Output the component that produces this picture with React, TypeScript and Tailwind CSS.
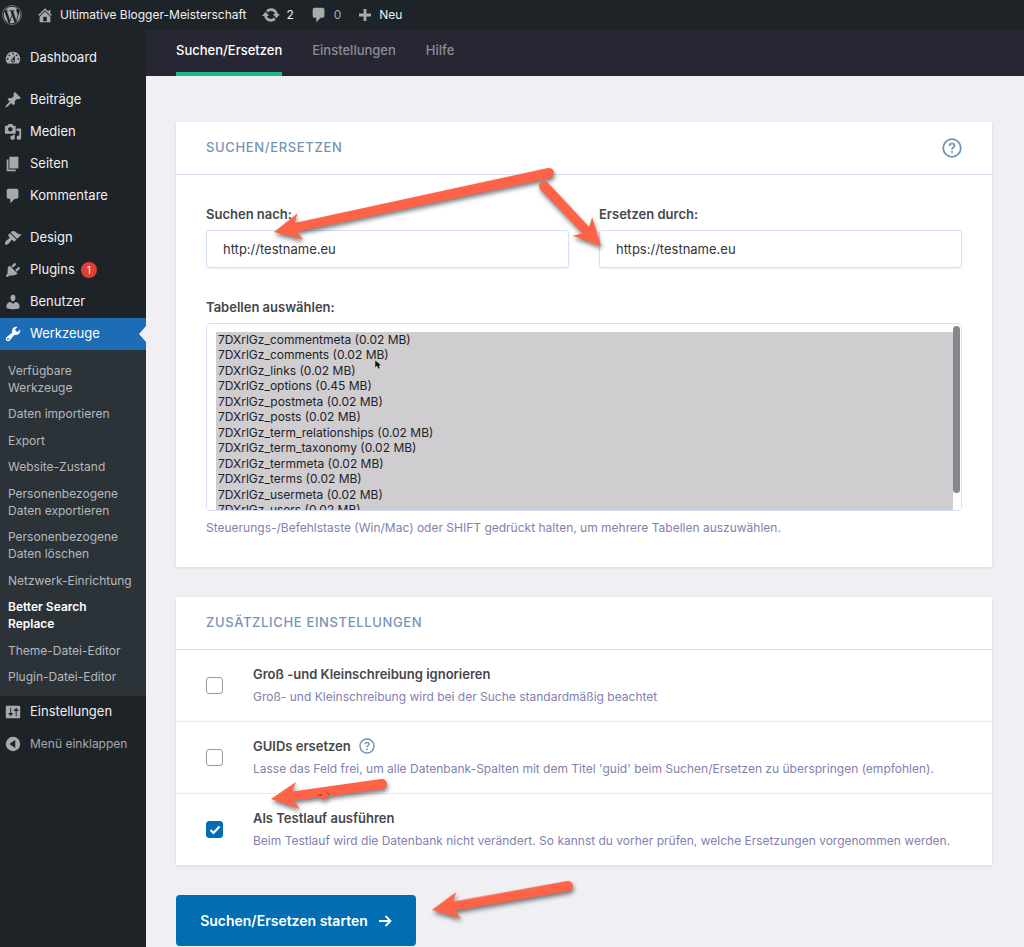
import { useState } from "react";
import type { ReactNode } from "react";
import { FaWordpress } from "react-icons/fa";

const icons = {
  dashboard:
    "M3.76 16h12.48A7.998 7.998 0 0010 3a7.998 7.998 0 00-6.24 13zM10 4c.55 0 1 .45 1 1s-.45 1-1 1-1-.45-1-1 .45-1 1-1zM6 6c.55 0 1 .45 1 1s-.45 1-1 1-1-.45-1-1 .45-1 1-1zm8 0c.55 0 1 .45 1 1s-.45 1-1 1-1-.45-1-1 .45-1 1-1zm-5.37 5.55L12 7v6c0 1.1-.9 2-2 2s-2-.9-2-2c0-.57.24-1.08.63-1.45zM4 10c.55 0 1 .45 1 1s-.45 1-1 1-1-.45-1-1 .45-1 1-1zm12 0c.55 0 1 .45 1 1s-.45 1-1 1-1-.45-1-1 .45-1 1-1zm-5 3c0-.55-.45-1-1-1s-1 .45-1 1 .45 1 1 1 1-.45 1-1z",
  post: "M10.44 3.02l1.82-1.82 6.36 6.35-1.83 1.82c-1.05-.68-2.48-.57-3.41.36l-.75.75c-.92.93-1.04 2.35-.35 3.41l-1.83 1.82-2.41-2.41-2.8 2.79c-.42.42-3.38 2.71-3.8 2.29s1.86-3.39 2.28-3.81l2.79-2.79L4.1 9.36l1.83-1.82c1.05.69 2.48.57 3.4-.36l.75-.75c.93-.92 1.05-2.35.36-3.41z",
  media:
    "M13 11V4c0-.55-.45-1-1-1h-1.67L9 1H5L3.67 3H2c-.55 0-1 .45-1 1v7c0 .55.45 1 1 1h10c.55 0 1-.45 1-1zM7 4.5c1.38 0 2.5 1.12 2.5 2.5S8.38 9.5 7 9.5 4.5 8.38 4.5 7 5.62 4.5 7 4.5zM14 6h5v10.5c0 1.38-1.12 2.5-2.5 2.5S14 17.88 14 16.5s1.12-2.5 2.5-2.5c.17 0 .34.02.5.05V9h-3V6zm-4 8.05V13h2v3.5c0 1.38-1.12 2.5-2.5 2.5S7 17.88 7 16.5 8.12 14 9.5 14c.17 0 .34.02.5.05z",
  page: "M6 15V2h10v13H6zm-1 1h8v2H3V5h2v11z",
  comments: "M5 2h9c1.1 0 2 .9 2 2v7c0 1.1-.9 2-2 2h-2l-5 5v-5H5c-1.1 0-2-.9-2-2V4c0-1.1.9-2 2-2z",
  appearance:
    "M14.48 11.06L7.41 3.99l1.5-1.5c.5-.56 2.3-.47 3.51.32 1.21.8 1.43 1.28 2.91 2.1 1.18.64 2.45 1.26 4.45.85zm-.71.71L6.7 4.7 4.93 6.47c-.39.39-.39 1.02 0 1.41l1.06 1.06c.39.39.39 1.03 0 1.42-.6.6-1.43 1.11-2.21 1.69-.35.26-.7.53-1.01.84C1.43 14.23.4 16.08 1.4 17.07c.99 1 2.84-.03 4.18-1.36.31-.31.58-.66.85-1.02.57-.78 1.08-1.61 1.69-2.21.39-.39 1.02-.39 1.41 0l1.06 1.06c.39.39 1.02.39 1.41 0z",
  plugins:
    "M13.11 4.36L9.87 7.6 8 5.73l3.24-3.24c.35-.34 1.05-.2 1.56.32.52.51.66 1.21.31 1.55zm-8 1.77l.91-1.12 9.01 9.01-1.19.84c-.71.71-2.63 1.16-3.82 1.16H6.14L4.9 17.26c-.59.59-1.54.59-2.12 0-.59-.58-.59-1.53 0-2.12l1.24-1.24v-3.88c0-1.13.4-3.19 1.09-3.89zm7.26 3.97l3.24-3.24c.34-.35 1.04-.21 1.55.31.52.51.66 1.21.31 1.55l-3.24 3.25z",
  users:
    "M10 9.25c-2.27 0-2.73-3.44-2.73-3.44C7 4.02 7.82 2 9.97 2c2.16 0 2.98 2.02 2.71 3.81 0 0-.41 3.44-2.68 3.44zm0 2.57L12.72 10c2.39 0 4.52 2.33 4.52 4.53v2.49s-3.65 1.13-7.24 1.13c-3.65 0-7.24-1.13-7.24-1.13v-2.49c0-2.25 1.94-4.48 4.47-4.48z",
  tools:
    "M16.68 9.77c-1.34 1.34-3.3 1.67-4.95.99l-5.41 6.52c-.99.99-2.59.99-3.58 0s-.99-2.59 0-3.57l6.52-5.42c-.68-1.65-.35-3.61.99-4.95 1.28-1.28 3.12-1.62 4.72-1.06l-2.89 2.89 2.82 2.82 2.86-2.87c.53 1.58.18 3.39-1.08 4.65zM3.81 16.21c.4.39 1.04.39 1.43 0 .4-.4.4-1.04 0-1.43-.39-.4-1.03-.4-1.43 0-.39.39-.39 1.03 0 1.43z",
  settings:
    "M18 16V4c0-.55-.45-1-1-1H3c-.55 0-1 .45-1 1v12c0 .55.45 1 1 1h14c.55 0 1-.45 1-1zM8 11h1c.55 0 1 .45 1 1s-.45 1-1 1H8v1.5c0 .28-.22.5-.5.5s-.5-.22-.5-.5V13H6c-.55 0-1-.45-1-1s.45-1 1-1h1V5.5c0-.28.22-.5.5-.5s.5.22.5.5V11zm5-2h-1c-.55 0-1-.45-1-1s.45-1 1-1h1V5.5c0-.28.22-.5.5-.5s.5.22.5.5V7h1c.55 0 1 .45 1 1s-.45 1-1 1h-1v5.5c0 .28-.22.5-.5.5s-.5-.22-.5-.5V9z",
  collapse: "M10 2a8 8 0 100 16 8 8 0 000-16zM12.5 5.5v9L6 10z",
  home: "M16 8.5l1.53 1.53-1.06 1.06L10 4.6l-6.47 6.49-1.06-1.06L10 2.5l4 4v-2h2v4zm-6-2.46l6 5.99V18H4v-5.97zM12 17v-5H8v5h4z",
  update:
    "M10.2 2.6c3.8 0 6.700 2.700 7.300 6.200H20l-4 4.800-4-4.800h2.500c-.5-1.900-2.200-3.200-4.300-3.200-1.400 0-2.600.6-3.400 1.600L4.600 5C6 3.500 8 2.600 10.200 2.600zm-.4 14.800c-3.800 0-6.700-2.700-7.300-6.200H0l4-4.800 4 4.800H5.500c.5 1.900 2.200 3.200 4.300 3.200 1.400 0 2.600-.6 3.400-1.600l2.200 2.200c-1.400 1.500-3.400 2.400-5.600 2.400z",
  plus: "M17.500 8.250v3.500h-5.750v5.750h-3.500v-5.750H2.500v-3.500h5.750V2.500h3.500v5.750z",
};

type IconName = keyof typeof icons;

const Icon = ({ name, className }: { name: IconName; className?: string }) => (
  <svg viewBox="0 0 20 20" fill="currentColor" fillRule="evenodd" aria-hidden="true" className={className}>
    <path d={icons[name]} />
  </svg>
);

const HelpIcon = ({ className }: { className?: string }) => (
  <svg viewBox="0 0 20 20" fill="none" stroke="currentColor" strokeWidth="1.8" aria-hidden="true" className={className}>
    <circle cx="10" cy="10" r="8.800" />
    <path d="M7.500 7.900c.1-1.500 1.100-2.300 2.500-2.300 1.500 0 2.500.8 2.500 2.100 0 1.800-2.500 1.900-2.500 3.700" />
    <circle cx="10" cy="14" r="1.100" fill="currentColor" stroke="none" />
  </svg>
);

const topMenu: { icon: IconName; label: string; count?: number; active?: boolean }[][] = [
  [{ icon: "dashboard", label: "Dashboard" }],
  [
    { icon: "post", label: "Beiträge" },
    { icon: "media", label: "Medien" },
    { icon: "page", label: "Seiten" },
    { icon: "comments", label: "Kommentare" },
  ],
  [
    { icon: "appearance", label: "Design" },
    { icon: "plugins", label: "Plugins", count: 1 },
    { icon: "users", label: "Benutzer" },
    { icon: "tools", label: "Werkzeuge", active: true },
  ],
];

const subMenu = [
  "Verfügbare Werkzeuge",
  "Daten importieren",
  "Export",
  "Website-Zustand",
  "Personenbezogene Daten exportieren",
  "Personenbezogene Daten löschen",
  "Netzwerk-Einrichtung",
  "Better Search Replace",
  "Theme-Datei-Editor",
  "Plugin-Datei-Editor",
];

const tables = [
  "7DXrlGz_commentmeta (0.02 MB)",
  "7DXrlGz_comments (0.02 MB)",
  "7DXrlGz_links (0.02 MB)",
  "7DXrlGz_options (0.45 MB)",
  "7DXrlGz_postmeta (0.02 MB)",
  "7DXrlGz_posts (0.02 MB)",
  "7DXrlGz_term_relationships (0.02 MB)",
  "7DXrlGz_term_taxonomy (0.02 MB)",
  "7DXrlGz_termmeta (0.02 MB)",
  "7DXrlGz_terms (0.02 MB)",
  "7DXrlGz_usermeta (0.02 MB)",
  "7DXrlGz_users (0.02 MB)",
];

const AdminBar = () => (
  <header className="flex h-[30px] items-center bg-[#1d2327] pl-0.5 text-xs text-[#f0f0f1]">
    <a href="#wp" aria-label="WordPress" className="mr-3.5 text-[#a7aaad]">
      <FaWordpress className="size-5" />
    </a>
    <a href="#site" className="mr-4 flex items-center gap-1.5">
      <Icon name="home" className="size-[18px] text-[#a7aaad]" />
      Ultimative Blogger-Meisterschaft
    </a>
    <a href="#updates" className="mr-4 flex items-center gap-1.5">
      <Icon name="update" className="size-[18px] text-[#a7aaad]" />2
    </a>
    <a href="#comments" className="mr-4 flex items-center gap-1.5 text-[#a7aaad]">
      <Icon name="comments" className="size-[18px]" />0
    </a>
    <a href="#new" className="flex items-center gap-1.5">
      <Icon name="plus" className="size-4 text-[#a7aaad]" />
      Neu
    </a>
  </header>
);

const Sidebar = () => (
  <nav className="w-[146px] shrink-0 bg-[#1d2327] pt-3 text-[13px] text-[#f0f0f1]">
    <div className="flex flex-col gap-2.5">
      {topMenu.map((group) => (
        <ul key={group[0].label}>
          {group.map((item) => (
            <li key={item.label} className={item.active ? "relative bg-[#1c6db6] text-white" : ""}>
              <a href={`#${item.icon}`} className="flex h-8 items-center pl-1">
                <Icon name={item.icon} className={item.active ? "mr-2 size-[18px]" : "mr-2 size-[18px] text-[#a7aaad]"} />
                {item.label}
                {item.count && (
                  <span className="ml-1.5 flex size-4 items-center justify-center rounded-full bg-[#e23e33] text-[10px] text-white">
                    {item.count}
                  </span>
                )}
              </a>
              {item.active && (
                <svg viewBox="0 0 7 16" className="absolute top-2 right-0 h-4 w-[7px]" aria-hidden="true">
                  <path d="M7 0v16L0 8z" fill="#f0eff4" />
                </svg>
              )}
            </li>
          ))}
        </ul>
      ))}
    </div>
    <ul className="flex min-h-[346px] flex-col justify-between bg-[#2c3338] px-2 pt-3 pb-[11px] text-xs leading-[17px] text-[#b4b9be]">
      {subMenu.map((label) => (
        <li key={label} className={label === "Better Search Replace" ? "pr-6 font-semibold text-white" : ""}>
          <a href="#sub">{label}</a>
        </li>
      ))}
    </ul>
    <a href="#settings" className="flex h-8 items-center pl-1">
      <Icon name="settings" className="mr-2 size-[18px] text-[#a7aaad]" />
      Einstellungen
    </a>
    <button type="button" className="flex h-8 items-center pl-1 text-xs text-[#a7aaad]">
      <Icon name="collapse" className="mr-2 size-[18px]" />
      Menü einklappen
    </button>
  </nav>
);

const Card = ({ title, help, children }: { title: string; help?: boolean; children: ReactNode }) => (
  <section className="bg-white shadow-[0_1px_3px_rgba(40,40,70,0.12)]">
    <div className="flex h-[53px] items-center justify-between border-b border-[#d5dff0] px-[30px]">
      <h2 className="text-[13px] font-medium tracking-wider text-[#7694b2] uppercase">{title}</h2>
      {help && (
        <button type="button" aria-label="Hilfe" className="text-[#7293b4]">
          <HelpIcon className="size-5" />
        </button>
      )}
    </div>
    {children}
  </section>
);

const Field = ({ id, label, value }: { id: string; label: string; value: string }) => (
  <div className="flex flex-col gap-[7px]">
    <label htmlFor={id} className="leading-[18px] font-semibold text-[#46464c]">
      {label}
    </label>
    <input
      id={id}
      name={id}
      defaultValue={value}
      className="h-[38px] w-full rounded-[3px] border border-[#d5dff5] px-4 text-[#333338] shadow-[0_1px_2px_rgba(120,130,200,0.15)]"
    />
  </div>
);

type OptionProps = { id: string; label: string; text: string; help?: boolean; defaultChecked?: boolean };

const Option = ({ id, label, text, help, defaultChecked }: OptionProps) => (
  <div className="flex h-[72px] items-center gap-[30px] border-b border-[#ecebf5] px-[30px] last:h-[71px] last:border-b-0">
    <div className="grid size-[17px] shrink-0 place-items-center">
      <input
        id={id}
        type="checkbox"
        defaultChecked={defaultChecked}
        className="peer col-start-1 row-start-1 size-[17px] appearance-none rounded-[3px] border border-[#9a9aa0] bg-white checked:border-[#016db3] checked:bg-[#016db3]"
      />
      <svg viewBox="0 0 12 12" className="pointer-events-none col-start-1 row-start-1 hidden size-3 peer-checked:block" aria-hidden="true">
        <path d="M1.500 6l3 3 6-6.500" fill="none" stroke="white" strokeWidth="2.200" />
      </svg>
    </div>
    <div>
      <div className="flex items-center gap-2">
        <label htmlFor={id} className="leading-5 font-semibold text-[#46464c]">
          {label}
        </label>
        {help && (
          <button type="button" aria-label={`Hilfe zu ${label}`} className="text-[#7293b4]">
            <HelpIcon className="size-4" />
          </button>
        )}
      </div>
      <p className="mt-[3px] text-xs leading-5 text-[#8480ad]">{text}</p>
    </div>
  </div>
);

const Arrow = ({ tip, tail }: { tip: [number, number]; tail: [number, number] }) => {
  const dx = tail[0] - tip[0];
  const dy = tail[1] - tip[1];
  const length = Math.hypot(dx, dy);
  const angle = (Math.atan2(dy, dx) * 180) / Math.PI;

  return (
    <path
      transform={`translate(${tip[0]} ${tip[1]}) rotate(${angle})`}
      d={`M0 0L27 -13.500L22 -4.500L${length} -5A5 5 0 0 1 ${length} 5L22 4.500L27 13.500Z`}
    />
  );
};

// Coordinates start at the top left corner of the main column
const Annotations = () => (
  <svg viewBox="0 0 500 917" className="pointer-events-none absolute top-0 left-0 h-[917px] w-[500px]" aria-hidden="true">
    <g fill="#ff6347" className="drop-shadow-[1px_3px_2px_rgba(0,0,0,0.5)]">
      <Arrow tip={[128, 202]} tail={[403, 143]} />
      <Arrow tip={[455, 216]} tail={[398, 156]} />
      <Arrow tip={[125, 769]} tail={[236, 754]} />
      <Arrow tip={[286, 880]} tail={[422, 856]} />
      <path d="M172 765l11-1-2 5-2-1-2 2-2-2z" />
    </g>
    <path d="M171 765l4-1 2 1-3 1zM180 761l2 4 2-1-2-1z" fill="#8c2a1c" fillOpacity="0.700" />
    <path d="M229 330v8l2-2 1 3 2-1-1-2 2-1z" fill="#111" stroke="#ddd" strokeWidth="0.500" />
  </svg>
);

const App = () => {
  const [selected, setSelected] = useState<string[]>(tables);

  return (
    <div className="flex min-h-screen flex-col bg-[#f0eff4] font-['Inter',sans-serif] text-[13px]">
      <AdminBar />
      <div className="flex flex-1">
        <Sidebar />
        <main className="relative min-w-0 flex-1">
          <nav className="flex h-[46px] gap-[30px] bg-[#262733] px-[30px] font-medium text-[#8d8d97]">
            <a href="#search" className="border-b-4 border-[#20b486] pt-[11px] text-white">
              Suchen/Ersetzen
            </a>
            <a href="#options" className="pt-[11px]">Einstellungen</a>
            <a href="#help" className="pt-[11px]">Hilfe</a>
          </nav>

          <form className="flex flex-col gap-[30px] pt-[46px] pr-8 pl-[30px]" onSubmit={(e) => e.preventDefault()}>
            <Card title="Suchen/Ersetzen" help>
              <div className="px-[30px] pt-[30px] pb-[29px]">
                <div className="grid grid-cols-2 gap-[30px]">
                  <Field id="search_for" label="Suchen nach:" value="http://testname.eu" />
                  <Field id="replace_with" label="Ersetzen durch:" value="https://testname.eu" />
                </div>
                <label htmlFor="tables" className="mt-[30px] block leading-[18px] font-semibold text-[#46464c]">
                  Tabellen auswählen:
                </label>
                <div className="relative mt-[7px]">
                  <select
                    id="tables"
                    multiple
                    value={selected}
                    onChange={(e) => setSelected(Array.from(e.target.selectedOptions, (o) => o.value))}
                    className="block h-[188px] w-full rounded-[4px] border border-[#d5dff5] bg-white pt-2 pr-2 pb-0 pl-[9px] text-xs text-[#222226] [scrollbar-width:none]"
                  >
                    {tables.map((table) => (
                      <option
                        key={table}
                        value={table}
                        className="min-h-0 px-0.5 py-0 leading-[15px] even:pb-px checked:bg-[#cfcdd0] checked:text-[#222226]"
                      >
                        {table}
                      </option>
                    ))}
                  </select>
                  <div className="absolute top-[3px] right-0.5 h-[167px] w-[7px] rounded-full bg-[#88878b]" />
                </div>
                <p className="mt-[7px] text-xs leading-5 text-[#8480ad]">
                  Steuerungs-/Befehlstaste (Win/Mac) oder SHIFT gedrückt halten, um mehrere Tabellen auszuwählen.
                </p>
              </div>
            </Card>

            <Card title="Zusätzliche Einstellungen">
              <Option
                id="case_insensitive"
                label="Groß -und Kleinschreibung ignorieren"
                text="Groß- und Kleinschreibung wird bei der Suche standardmäßig beachtet"
              />
              <Option
                id="replace_guids"
                label="GUIDs ersetzen"
                text="Lasse das Feld frei, um alle Datenbank-Spalten mit dem Titel 'guid' beim Suchen/Ersetzen zu überspringen (empfohlen)."
                help
              />
              <Option
                id="dry_run"
                label="Als Testlauf ausführen"
                text="Beim Testlauf wird die Datenbank nicht verändert. So kannst du vorher prüfen, welche Ersetzungen vorgenommen werden."
                defaultChecked
              />
            </Card>

            <button
              type="submit"
              className="flex h-[51px] w-[240px] items-center justify-center gap-2.5 self-start rounded-[4px] bg-[#016db3] text-sm font-semibold text-white"
            >
              Suchen/Ersetzen starten
              <svg viewBox="0 0 14 14" fill="none" stroke="currentColor" strokeWidth="1.800" className="size-3.5" aria-hidden="true">
                <path d="M1 7h11M7.500 2l5 5-5 5" />
              </svg>
            </button>
          </form>

          <Annotations />
        </main>
      </div>
    </div>
  );
};

export default App;
